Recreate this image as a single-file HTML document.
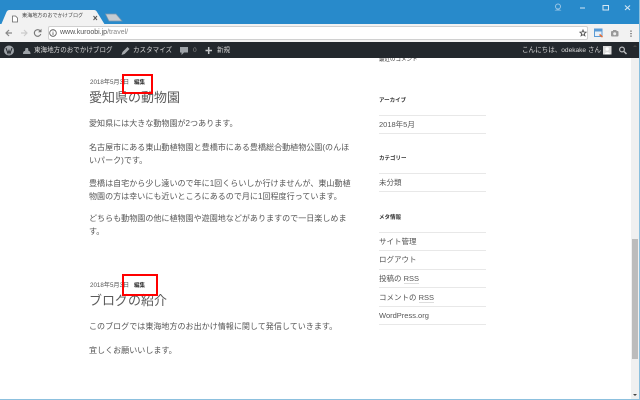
<!DOCTYPE html>
<html lang="ja"><head><meta charset="utf-8"><title>東海地方のおでかけブログ</title>
<style>
html,body{margin:0;padding:0;width:640px;height:400px;overflow:hidden;background:#fff}
body{position:relative;font-family:"Liberation Sans","Noto Sans CJK JP",sans-serif;color:#333}
.a{position:absolute;white-space:nowrap}
.p{font-size:8.05px;line-height:12px;color:#555}
.s{font-size:7.5px;line-height:12px;color:#555}
.h{font-size:13px;line-height:18px;color:#5a5a5a}
.d{font-size:6.2px;line-height:8px;color:#555}
.e{font-size:5.5px;line-height:8px;color:#333;font-weight:bold}
.w{font-size:5.5px;line-height:8px;color:#333;font-weight:bold}
.l{position:absolute;left:379px;width:107px;height:1px;background:#e8e8e8}
.b{font-size:6.55px;line-height:10px;color:#d8d8d8}
.r{position:absolute;border:2.5px solid #f00;box-sizing:border-box}
svg{position:absolute;overflow:visible}
</style></head><body>
<div class="a" style="left:0;top:0;width:640px;height:24px;background:#288acb"></div>
<svg style="left:0;top:0" width="130" height="25"><path d="M1 25 L6.500 12 Q7.500 10 9.500 10 L94 10 Q96 10 97 12 L105 25Z" fill="#f2f2f2"/><path d="M105.500 14 L116 14 L122 21 L109 21Z" fill="#c6ccd2" stroke="#7d98ad" stroke-width=".7"/><path d="M12.500 16h3l2 2v4h-5z" fill="#fff" stroke="#666" stroke-width=".8"/><path d="M93.500 16l3.500 4m0-4l-3.500 4" stroke="#555" stroke-width="1"/></svg>
<div class="a" style="left:22px;top:11px;font-size:5.1px;line-height:11px;color:#444;letter-spacing:0">東海地方のおでかけブログ</div>
<div class="a" style="left:0;top:24px;width:640px;height:18px;background:#f2f2f2"></div>
<div class="a" style="left:48px;top:26px;width:540px;height:14px;background:#fff;border:.7px solid #d0d0d0;box-sizing:border-box;border-radius:2px"></div>
<svg style="left:0;top:24px" width="640" height="18"><path d="M12 9h-5.500m2.500-3l-3 3 3 3" fill="none" stroke="#888" stroke-width="1.200"/><path d="M21 9h5.500m-2.500-3l3 3-3 3" fill="none" stroke="#ccc" stroke-width="1.200"/><path d="M40.300 7a3.300 3.300 0 1 0 .5 3" fill="none" stroke="#777" stroke-width="1.100"/><path d="M41.500 4.800v3.400h-3.400z" fill="#777"/><circle cx="53" cy="9" r="3.300" fill="none" stroke="#555" stroke-width=".8"/><path d="M53 8.200v2.800M53 6.700v.7" stroke="#555" stroke-width=".8"/><path d="M583 6l.8 2 2.200.2-1.700 1.400.6 2.200-1.900-1.200-1.900 1.200.6-2.200-1.700-1.400 2.200-.2z" fill="none" stroke="#555" stroke-width=".9"/><rect x="594.500" y="5" width="7.500" height="7.500" fill="#e8f0f8" stroke="#5b9bd5"/><rect x="594.500" y="5" width="7.500" height="2.500" fill="#5b9bd5"/><path d="M599.500 10.500l3 2.500" stroke="#e8703a" stroke-width="1.500"/><rect x="611" y="7" width="7.500" height="5.500" rx="1" fill="#999"/><rect x="613" y="6" width="3.500" height="1.500" fill="#999"/><circle cx="614.700" cy="9.700" r="1.500" fill="#eee"/><path d="M631 6.500v1.200M631 9v1.200M631 11.500v1.200" stroke="#555" stroke-width="1.200"/></svg>
<svg style="left:0;top:0" width="640" height="24"><circle cx="558" cy="6.500" r="2.500" fill="none" stroke="#9ac6e6" stroke-width="1"/><path d="M554.500 10.500a4.500 3 0 0 1 7 0" fill="#9ac6e6"/><path d="M580 8h5" stroke="#d5e7f4" stroke-width="1"/><rect x="603" y="5.500" width="5.500" height="4.500" fill="none" stroke="#d5e7f4" stroke-width="1"/><path d="M625 5.500l5 4.500m0-4.500l-5 4.500" stroke="#d5e7f4" stroke-width="1.100"/></svg>
<div class="a" style="left:60px;top:27px;font-size:7px;line-height:12px;color:#555">www.kuroobi.jp<span style="color:#888">/travel/</span></div>

<div class="a" style="left:0;top:42px;width:640px;height:16px;background:#23282d"></div>
<svg style="left:0;top:42px" width="640" height="16"><circle cx="9" cy="8.500" r="5" fill="#9ea3a8"/><path d="M6 6l2 5.500 1-3 1 3 2-5.500" stroke="#23282d" fill="none" stroke-width="1"/><path d="M23 12c0-3 1.500-3 2-3l.5-3h2.500l.5 3c1 0 2 .5 2 3z" fill="#9ea3a8"/><path d="M121.500 13l1-3 5-5 2 2-5 5z" fill="#a5a9ad"/><path d="M180 5h8v5.500h-4l-2.500 2.500v-2.500h-1.500z" fill="#9ea3a8"/><path d="M205.500 8.500h6.500M208.700 5v7" stroke="#c4c6c8" stroke-width="1.500"/><rect x="603" y="4" width="8.500" height="8.500" fill="#dcdcdc"/><circle cx="607.200" cy="7" r="1.700" fill="#fff"/><path d="M604.500 12.500a2.800 2.800 0 0 1 5.500 0z" fill="#fff"/><circle cx="622" cy="7.500" r="2.400" fill="none" stroke="#b9bbbd" stroke-width="1.200"/><path d="M624 9.500l2.500 2.500" stroke="#b9bbbd" stroke-width="1.500"/></svg>
<div class="a b" style="left:34px;top:46px">東海地方のおでかけブログ</div>
<div class="a b" style="left:133px;top:46px">カスタマイズ</div>
<div class="a b" style="left:193px;top:46px;color:#888">0</div>
<div class="a b" style="left:217px;top:46px">新規</div>
<div class="a b" style="left:522px;top:46px">こんにちは、odekake さん</div>

<div class="a" style="left:631px;top:58px;width:8px;height:341px;background:#f0f0f0"></div>
<div class="a" style="left:632px;top:239px;width:6px;height:120px;background:#bcbcbc"></div>
<svg style="left:631px;top:42px" width="8" height="358"><path d="M2 5l2-2 2 2z" fill="#444"/><path d="M2 352h4l-2 2z" fill="#444"/></svg>
<div class="a" style="left:639px;top:0;width:1px;height:400px;background:#8cc0de"></div>
<div class="a" style="left:0;top:399px;width:640px;height:1px;background:#8cc0de"></div>

<div class="a d" style="left:90px;top:79px">2018年5月3日</div>
<div class="a e" style="left:134px;top:79px">編集</div>
<div class="a h" style="left:89px;top:88.500px">愛知県の動物園</div>
<div class="a p" style="left:89px;top:118px">愛知県には大きな動物園が2つあります。</div>
<div class="a p" style="left:89px;top:142px">名古屋市にある東山動植物園と豊橋市にある豊橋総合動植物公園(のんほ</div>
<div class="a p" style="left:89px;top:155px">いパーク)です。</div>
<div class="a p" style="left:89px;top:178px">豊橋は自宅から少し遠いので年に1回くらいしか行けませんが、東山動植</div>
<div class="a p" style="left:89px;top:191px">物園の方は幸いにも近いところにあるので月に1回程度行っています。</div>
<div class="a p" style="left:89px;top:213px">どちらも動物園の他に植物園や遊園地などがありますので一日楽しめま</div>
<div class="a p" style="left:89px;top:226px">す。</div>
<div class="r" style="left:122px;top:74px;width:31px;height:20px"></div>

<div class="a d" style="left:90px;top:281.500px">2018年5月3日</div>
<div class="a e" style="left:134px;top:281.500px">編集</div>
<div class="a h" style="left:89px;top:291.500px">ブログの紹介</div>
<div class="a p" style="left:89px;top:321px">このブログでは東海地方のお出かけ情報に関して発信していきます。</div>
<div class="a p" style="left:89px;top:345px">宜しくお願いいします。</div>
<div class="r" style="left:122px;top:274px;width:36px;height:22px"></div>

<div class="a w" style="left:379px;top:58px;height:4px;overflow:hidden;line-height:5px;font-weight:normal">最近のコメント</div>
<div class="a w" style="left:379px;top:97px">アーカイブ</div>
<div class="l" style="top:115px"></div>
<div class="a s" style="left:379px;top:118.500px">2018年5月</div>
<div class="l" style="top:133px"></div>
<div class="a w" style="left:379px;top:155px">カテゴリー</div>
<div class="l" style="top:173px"></div>
<div class="a s" style="left:379px;top:177px">未分類</div>
<div class="l" style="top:191px"></div>
<div class="a w" style="left:379px;top:213.500px">メタ情報</div>
<div class="l" style="top:232px"></div>
<div class="a s" style="left:379px;top:236px">サイト管理</div>
<div class="l" style="top:250px"></div>
<div class="a s" style="left:379px;top:254px">ログアウト</div>
<div class="l" style="top:269px"></div>
<div class="a s" style="left:379px;top:273px">投稿の <span style="border-bottom:1px solid #ddd">RSS</span></div>
<div class="l" style="top:287px"></div>
<div class="a s" style="left:379px;top:291.500px">コメントの <span style="border-bottom:1px solid #ddd">RSS</span></div>
<div class="l" style="top:306px"></div>
<div class="a s" style="left:379px;top:310px">WordPress.org</div>
<div class="l" style="top:324px"></div>
</body></html>
